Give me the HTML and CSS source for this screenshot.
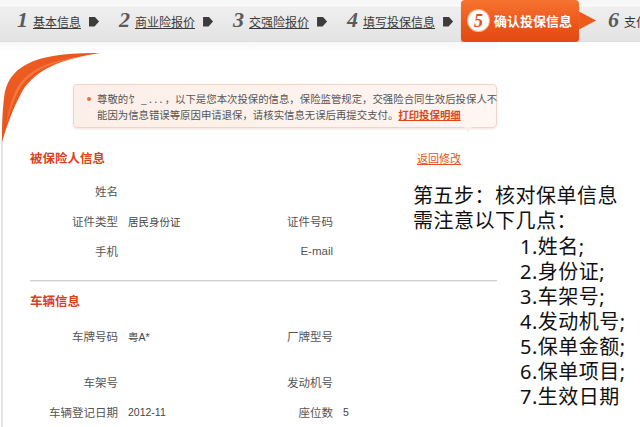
FILE: index.html
```html
<!DOCTYPE html>
<html lang="zh-CN">
<head>
    <meta charset="UTF-8">
    <title>确认投保信息</title>
    <link rel="stylesheet" href="styles.css">
</head>
<body>
    <div class="steps">
        <div class="step"><span class="num">1</span><a href="#">基本信息</a></div>
        <span class="arrow"></span>
        <div class="step"><span class="num">2</span><a href="#">商业险报价</a></div>
        <span class="arrow"></span>
        <div class="step"><span class="num">3</span><a href="#">交强险报价</a></div>
        <span class="arrow"></span>
        <div class="step"><span class="num">4</span><a href="#">填写投保信息</a></div>
        <span class="arrow last"></span>
        <div class="step current"><span class="circle">5</span><span>确认投保信息</span></div>
        <div class="step next"><span class="num">6</span><span>支付</span></div>
    </div>

    <div class="page">
        <svg class="swoosh" width="110" height="385" viewBox="0 42 110 385">
            <defs>
                <linearGradient id="sw" x1="0" y1="0" x2="1" y2="1">
                    <stop offset="0" stop-color="#ee6228"/>
                    <stop offset="0.5" stop-color="#ea5219"/>
                    <stop offset="1" stop-color="#de3e0c"/>
                </linearGradient>
            </defs>
            <line x1="2" y1="138" x2="2" y2="427" stroke="#dcdcdc" stroke-width="1.5"/>
            <path d="M100,53 C35,52 7,66 4,98 C2,115 2,130 2,142 C8,122 14,106 23,90 C36,70 60,59 100,53 Z" fill="url(#sw)"/>
            <path d="M86,56 C50,59 24,71 15,92 C10,104 7,116 6,126 C10,110 15,96 22,85 C35,68 56,61 86,56 Z" fill="#f8955f" opacity="0.5"/>
        </svg>

        <div class="notice">
            <p>尊敬的饣 _ . . . ，以下是您本次投保的信息，保险监管规定，交强险合同生效后投保人不<br>能因为信息错误等原因申请退保，请核实信息无误后再提交支付。<a href="#">打印投保明细</a></p>
        </div>

        <div class="section-head">
            <h3>被保险人信息</h3>
            <a href="#">返回修改</a>
        </div>
        <div class="fields">
            <div class="row">
                <span class="label">姓名</span><span class="value"></span>
                <span class="label"></span><span class="value"></span>
            </div>
            <div class="row">
                <span class="label">证件类型</span><span class="value">居民身份证</span>
                <span class="label">证件号码</span><span class="value"></span>
            </div>
            <div class="row">
                <span class="label">手机</span><span class="value"></span>
                <span class="label">E-mail</span><span class="value"></span>
            </div>
        </div>

        <div class="divider"></div>

        <div class="section-head">
            <h3>车辆信息</h3>
        </div>
        <div class="fields">
            <div class="row tall">
                <span class="label">车牌号码</span><span class="value">粤A*</span>
                <span class="label">厂牌型号</span><span class="value"></span>
            </div>
            <div class="row">
                <span class="label">车架号</span><span class="value"></span>
                <span class="label">发动机号</span><span class="value"></span>
            </div>
            <div class="row">
                <span class="label">车辆登记日期</span><span class="value">2012-11</span>
                <span class="label">座位数</span><span class="value">5</span>
            </div>
        </div>
    </div>

    <div class="note">
        <p>第五步：核对保单信息</p>
        <p>需注意以下几点：</p>
        <ol>
            <li>1.姓名;</li>
            <li>2.身份证;</li>
            <li>3.车架号;</li>
            <li>4.发动机号;</li>
            <li>5.保单金额;</li>
            <li>6.保单项目;</li>
            <li>7.生效日期</li>
        </ol>
    </div>
</body>
</html>
```

FILE: styles.css
```css
body {
    margin: 0;
    width: 640px;
    height: 427px;
    overflow: hidden;
    position: relative;
    background: #fff;
    font-family: 'Liberation Sans', 'Noto Sans CJK SC', sans-serif;
    color: #333;
}
a {
    color: #333;
}

/* step bar */
.steps {
    height: 42px;
    display: flex;
    align-items: center;
    padding-left: 17px;
    overflow: hidden;
    background: linear-gradient(#f7f7f7 0, #f7f7f7 4px, #fff 5px, #efefef 7px, #e3e3e3 41px, #d9d9d9 42px);
    white-space: nowrap;
}
.steps > * {
    flex-shrink: 0;
}
.step {
    display: flex;
    align-items: center;
}
.num {
    font-family: 'Liberation Serif', serif;
    font-style: italic;
    font-weight: bold;
    font-size: 22px;
    color: #5a5a5a;
    width: 11px;
    margin-right: 5px;
    margin-top: -2px;
}
.step a {
    font-size: 12px;
    color: #3a3a3a;
}
.arrow {
    width: 10px;
    height: 10px;
    margin: 1px 20px 0 8px;
    background: #3c3c3c;
    clip-path: polygon(0 0, 55% 0, 100% 50%, 55% 100%, 0 100%);
}
.arrow.last {
    margin-right: 8px;
}
.current {
    position: relative;
    height: 42px;
    padding: 0 7px 0 7px;
    margin-top: -1px;
    background: linear-gradient(#f7732f, #ec551a 60%, #e24a12);
    border-radius: 4px;
    color: #fff;
    font-size: 13px;
    font-weight: bold;
    box-shadow: 0 1px 1px rgba(120, 40, 0, 0.4);
}
.current::after {
    content: '';
    position: absolute;
    right: -17px;
    top: 12px;
    width: 17px;
    height: 18px;
    background: #ee5a1c;
    clip-path: polygon(0 0, 100% 50%, 0 100%);
}
.circle {
    width: 21px;
    height: 21px;
    margin-right: 5px;
    border-radius: 50%;
    background: #fff;
    color: #e9501a;
    font-family: 'Liberation Serif', serif;
    font-style: italic;
    font-weight: bold;
    font-size: 18px;
    line-height: 22px;
    text-align: center;
    box-shadow: 0 0 0 1px #f9b08a;
}
.next {
    margin-left: 29px;
    font-size: 12px;
    color: #333;
}

/* page body */
.page {
    position: relative;
    width: 497px;
    padding-top: 42px;
    background: linear-gradient(#f8f8f8 0, #fff 10px);
}
.swoosh {
    position: absolute;
    left: 0;
    top: 0;
}
.notice {
    position: relative;
    margin-left: 73px;
    height: 44px;
    box-sizing: border-box;
    padding: 6px 0 6px 23px;
    background: linear-gradient(90deg, #fcefe9, #fff5f1);
    border: 1px solid #f4d3c7;
    border-radius: 4px;
    box-shadow: 0 1px 2px rgba(210, 140, 120, 0.25);
}
.notice::before {
    content: '';
    position: absolute;
    left: 13px;
    top: 12px;
    width: 4px;
    height: 4px;
    border-radius: 50%;
    background: #ee6a3c;
}
.notice::after {
    content: '';
    position: absolute;
    right: 24px;
    bottom: -6px;
    width: 8px;
    height: 6px;
    background: #fbeee8;
    clip-path: polygon(0 0, 100% 0, 50% 100%);
}
.notice p {
    margin: 0;
    font-family: 'Noto Sans CJK SC', sans-serif;
    font-size: 10.4px;
    line-height: 16px;
    color: #555;
    white-space: nowrap;
}
.notice a {
    color: #e0461c;
    font-weight: bold;
}

.section-head {
    display: flex;
    justify-content: space-between;
    align-items: center;
    margin: 22px 36px 0 30px;
    height: 16px;
}
.section-head h3 {
    margin: 0;
    font-family: 'Noto Sans CJK SC', sans-serif;
    font-size: 12.5px;
    line-height: 16px;
    color: #d9431a;
}
.section-head a {
    font-family: 'Noto Sans CJK SC', sans-serif;
    font-size: 11px;
    color: #e3502a;
}

.fields {
    margin: 10px 0 0 30px;
}
.row {
    display: grid;
    grid-template-columns: 88px 130px 65px 1fr;
    column-gap: 10px;
    align-items: center;
    height: 30px;
}
.row.tall {
    margin-bottom: 16px;
}
.label {
    text-align: right;
    font-size: 11.5px;
    color: #555;
}
.value {
    font-size: 10.5px;
    color: #444;
}

.divider {
    margin: 14px 0 0 30px;
    height: 1px;
    background: #cfcfcf;
    box-shadow: 0 1px 1px #ececec;
}
.divider + .section-head {
    margin-top: 12px;
}
.divider + .section-head + .fields {
    margin-top: 12px;
}

/* overlay annotation */
.note {
    position: absolute;
    left: 413px;
    top: 183px;
    font-family: 'Noto Sans', 'Noto Sans CJK SC', sans-serif;
    font-size: 20px;
    line-height: 25px;
    color: #111;
    letter-spacing: 0.5px;
}
.note p {
    margin: 0;
}
.note ol {
    margin: 1px 0 0;
    padding-left: 107px;
    list-style: none;
}
```
